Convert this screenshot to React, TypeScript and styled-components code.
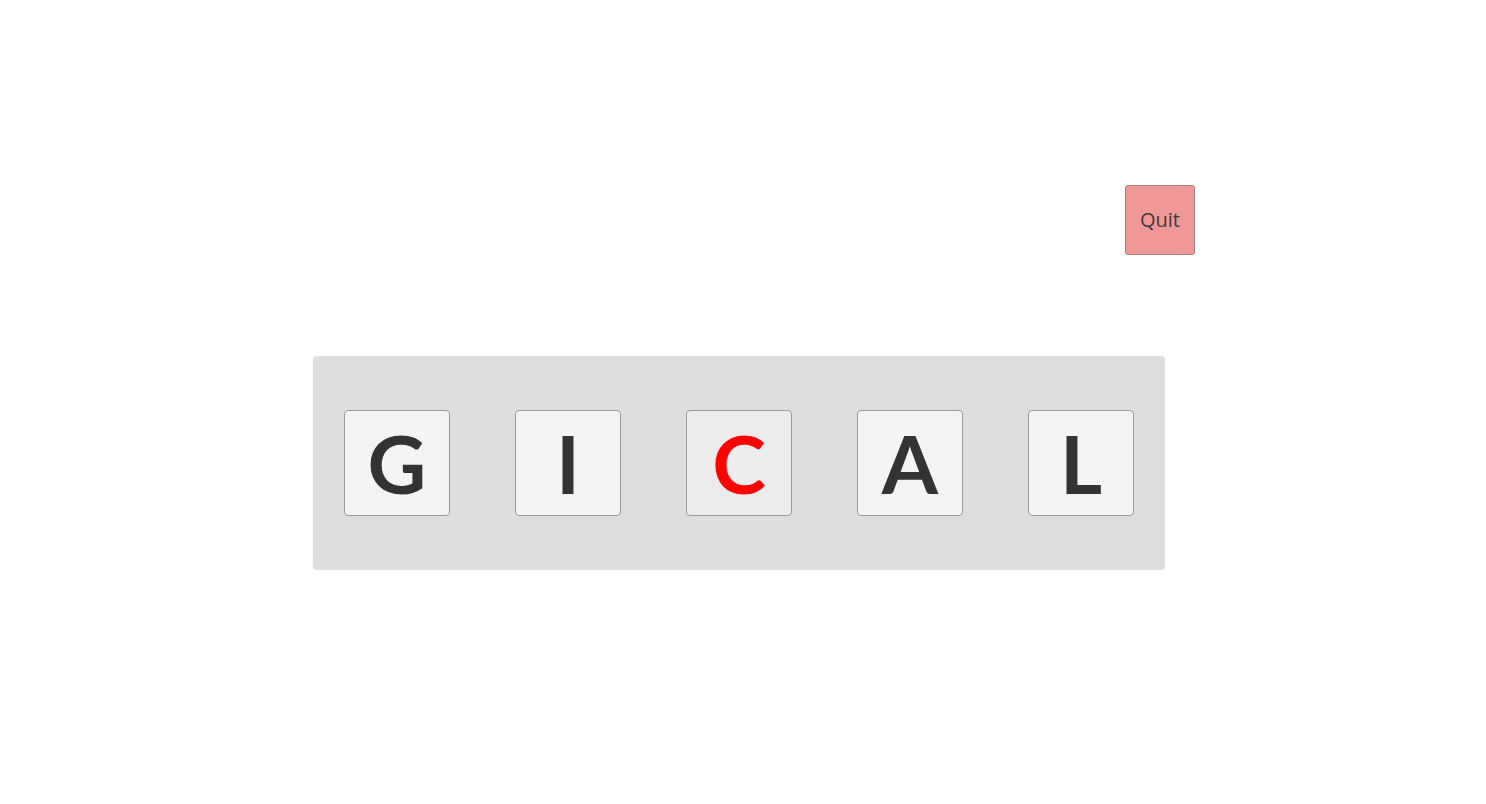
import React from "react";
import styled, { createGlobalStyle } from "styled-components";

const Global = createGlobalStyle`
  html, body { margin: 0; padding: 0; background: #ffffff; }
  body { font-family: "Open Sans", "Liberation Sans", sans-serif; }
`;

const Page = styled.div`
  width: 1486px;
  height: 804px;
  display: flex;
  justify-content: flex-start;
  padding-left: 313px;
  box-sizing: border-box;
`;

const Column = styled.div`
  width: 852px;
  display: flex;
  flex-direction: column;
  padding-top: 185px;
`;

const TopBar = styled.div`
  display: flex;
  justify-content: flex-end;
  margin-right: -30px;
  height: 70px;
`;

const QuitButton = styled.button`
  width: 70px;
  height: 70px;
  box-sizing: border-box;
  background: #f09898;
  border: 1px solid #a08080;
  border-radius: 3px;
  color: #3a3a3a;
  font-family: "Open Sans", "Liberation Sans", sans-serif;
  font-size: 20px;
  padding: 0 0 2px;
  cursor: pointer;
`;

const Board = styled.div`
  margin-top: 101px;
  height: 214px;
  box-sizing: border-box;
  background: #dedede;
  border-radius: 4px;
  padding: 54px 31px;
  display: flex;
  justify-content: space-between;
  align-items: center;
`;

const Tile = styled.div<{ $active?: boolean }>`
  width: 106px;
  height: 106px;
  box-sizing: border-box;
  background: ${(p) => (p.$active ? "#ececec" : "#f4f4f4")};
  border: 1px solid #9a9a9a;
  border-radius: 4px;
  display: flex;
  align-items: center;
  justify-content: center;
  font-family: Lato, "Noto Sans", sans-serif;
  font-weight: 700;
  font-size: 81px;
  line-height: 1;
  color: ${(p) => (p.$active ? "#ff0000" : "#333333")};
  padding-bottom: 2px;
`;

const letters = ["G", "I", "C", "A", "L"];

export default function App() {
  return (
    <>
      <Global />
      <Page>
        <Column>
          <TopBar>
            <QuitButton>Quit</QuitButton>
          </TopBar>
          <Board>
            {letters.map((l, i) => (
              <Tile key={i} $active={i === 2}>
                {l}
              </Tile>
            ))}
          </Board>
        </Column>
      </Page>
    </>
  );
}
